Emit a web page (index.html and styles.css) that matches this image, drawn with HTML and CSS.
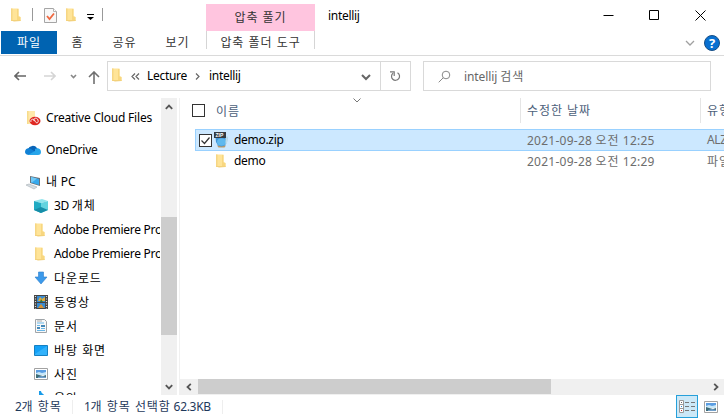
FILE: index.html
```html
<!DOCTYPE html>
<html lang="ko">
<head>
    <meta charset="UTF-8">
    <meta name="viewport" content="width=device-width, initial-scale=1.0">
    <title>intellij</title>
    <link rel="stylesheet" href="styles.css">
</head>
<body>
    <svg class="sprites">
        <symbol id="folder" viewBox="0 0 12 14">
            <path d="M1 .5h7.500V8l2 1v4H1z" fill="#ffe498"/>
            <path d="M1 .5h1.500v12.500H1z" fill="#f6d684"/>
            <path d="M7 1h1.500v7.500l2 .5v4H7z" fill="#f8d780"/>
            <path d="M1 12.500l3 1 6.500-.5v-1H1z" fill="#f3d17b"/>
        </symbol>
        <symbol id="picture" viewBox="0 0 14 12">
            <path d="M.5.5h13v11H.5z" fill="#fff" stroke="#a2a2a2"/>
            <path d="M2 2h10v4H2z" fill="#5a9de2"/>
            <path d="M2 5l3-1 3 1 4-1v3H2z" fill="#c8e7f8"/>
            <path d="M2 6l3 1 4 1 3-1v3H2z" fill="#3c6c78"/>
            <path d="M4 9l4-1 4 1v1H4z" fill="#719fca"/>
        </symbol>
    </svg>
    <div class="explorer">
        <header class="titlebar">
            <div class="quick">
                <svg class="folder" width="12" height="14"><use href="#folder"/></svg>
                <span class="sep"></span>
                <svg class="props" width="13" height="15" viewBox="0 0 13 15">
                    <path d="M.5.5h9l3 3v11H.5z" fill="#f8f8f8" stroke="#a5a5a5"/>
                    <path d="M9.500.5v3h3" fill="#fff" stroke="#b5b5b5"/>
                    <path d="M3 8l2.500 3L10 5.500" fill="none" stroke="#ef6840" stroke-width="1.800"/>
                </svg>
                <svg class="folder" width="12" height="14"><use href="#folder"/></svg>
                <svg class="more" width="7" height="6" viewBox="0 0 7 6"><path d="M0 0h7v1H0zM0 3h7L3.500 6z"/></svg>
                <span class="sep"></span>
            </div>
            <div class="context ko">압축 풀기</div>
            <div class="title">intellij</div>
            <div class="controls">
                <svg width="11" height="11" viewBox="0 0 11 11"><path d="M.5 5.500h10"/></svg>
                <svg width="11" height="11" viewBox="0 0 11 11"><path d="M.5.5h9v9h-9z"/></svg>
                <svg width="11" height="11" viewBox="0 0 11 11"><path d="M.5.5l10 10M10.500.5l-10 10"/></svg>
            </div>
        </header>

        <nav class="ribbon ko">
            <div class="tab file">파일</div>
            <div class="tab home">홈</div>
            <div class="tab share">공유</div>
            <div class="tab view">보기</div>
            <div class="tab tools">압축 폴더 도구</div>
            <svg class="collapse" width="10" height="6" viewBox="0 0 10 6"><path d="M1 1l4 4 4-4" fill="none" stroke="#a0a0a0" stroke-width="1.300"/></svg>
            <div class="help">?</div>
        </nav>

        <div class="navbar">
            <div class="arrows">
                <svg width="12" height="10" viewBox="0 0 12 10"><path d="M12 5H1M5 1L1 5l4 4" stroke="#666"/></svg>
                <svg width="12" height="10" viewBox="0 0 12 10"><path d="M0 5h11M7 1l4 4-4 4" stroke="#d5d5d5"/></svg>
                <svg width="7" height="5" viewBox="0 0 7 5"><path d="M1 1l2.500 2.500L6 1" stroke="#888"/></svg>
                <svg class="up" width="12" height="13" viewBox="0 0 12 13"><path d="M6 13V1M1 6l5-5 5 5" stroke="#707070"/></svg>
            </div>
            <div class="address">
                <svg class="folder" width="12" height="14"><use href="#folder"/></svg>
                <svg class="double" width="9" height="7" viewBox="0 0 9 7"><path d="M4 .5l-3 3 3 3M8 .5l-3 3 3 3"/></svg>
                <span class="crumb">Lecture</span>
                <svg class="chevron" width="5" height="7" viewBox="0 0 5 7"><path d="M1 .5l3 3-3 3"/></svg>
                <span class="crumb last">intellij</span>
                <svg class="drop" width="10" height="7" viewBox="0 0 10 7"><path d="M1 1l4 4 4-4"/></svg>
                <div class="refresh">
                    <svg width="11" height="12" viewBox="0 0 11 12"><path d="M7.500 2.800A4 4 0 1 1 3 3.200M0 1.800h4.200V6" fill="none" stroke="#777" stroke-width="1.600"/></svg>
                </div>
            </div>
            <div class="search">
                <svg width="13" height="13" viewBox="0 0 13 13"><circle cx="8" cy="5" r="3.800"/><path d="M5.200 7.800L.7 12.300"/></svg>
                <span>intellij <span class="ko">검색</span></span>
            </div>
        </div>

        <main class="content">
            <aside class="tree">
                <div class="item root">
                    <svg width="16" height="16" viewBox="0 0 16 16">
                        <path d="M2 1h8v13H2z" fill="#f7dc8c"/><path d="M3.500 1H10v13H3.500z" fill="#ffe9ab"/>
                        <ellipse cx="10" cy="11" rx="5.500" ry="4.200" fill="#df2823"/>
                        <path d="M6 12c-1-3 3-4 4-1s4 2 3-1-5-2-4 1" fill="none" stroke="#fff" stroke-width=".9"/>
                    </svg>
                    <span class="files">Creative Cloud Files</span>
                </div>
                <div class="item root">
                    <svg width="16" height="16" viewBox="0 0 16 16">
                        <path d="M3 7a5 4.500 0 0 1 9-1l2 4-9 1z" fill="#0864b8"/>
                        <path d="M0 10c0-3 3-5 6-3l6 4-8 2C2 13 0 12 0 10z" fill="#1181d5"/>
                        <path d="M10 7c3-2 6 0 6 3 0 2-1 3-3 3H3l7-4z" fill="#27a5ea"/>
                    </svg>
                    <span>OneDrive</span>
                </div>
                <div class="item root">
                    <svg width="16" height="16" viewBox="0 0 16 16">
                        <path d="M5 2l10 2v8L5 9z" fill="#68737b"/><path d="M6 3l8 2v6L6 8.500z" fill="#36a9ed"/>
                        <path d="M6 3l6 1.500-5 4-1-.3z" fill="#71c9f6"/>
                        <path d="M1 11l3-1 8 3-3 2z" fill="#d6dde2" stroke="#a7b0b6" stroke-width=".6"/>
                    </svg>
                    <span><span class="ko">내</span> PC</span>
                </div>
                <div class="item">
                    <svg width="16" height="16" viewBox="0 0 16 16">
                        <path d="M1 3l8-2 6 2-7 2z" fill="#92e5ed"/><path d="M1 3l7 2v10l-7-3z" fill="#20abc3"/>
                        <path d="M8 5l7-2v9l-7 3z" fill="#63d3df"/><path d="M1 12l7-3 7 3-7 3z" fill="#168da8"/>
                    </svg>
                    <span>3D <span class="ko">개체</span></span>
                </div>
                <div class="item">
                    <svg class="folder" width="12" height="14"><use href="#folder"/></svg>
                    <span class="adobe">Adobe Premiere Pro</span>
                </div>
                <div class="item">
                    <svg class="folder" width="12" height="14"><use href="#folder"/></svg>
                    <span class="adobe">Adobe Premiere Pro</span>
                </div>
                <div class="item">
                    <svg width="16" height="16" viewBox="0 0 16 16"><path d="M5.500 2h5v5H14l-6 7-6-7h3.500z" fill="#3c9aeb" stroke="#2e7dcb" stroke-width=".6"/></svg>
                    <span class="ko">다운로드</span>
                </div>
                <div class="item">
                    <svg width="16" height="16" viewBox="0 0 16 16">
                        <path d="M1 1h14v14H1z" fill="#444"/><path d="M4 2h8v6H4z" fill="#398bd2"/><path d="M4 9h8v5H4z" fill="#398bd2"/>
                        <path d="M5 7l2-4 2 2 3-2v4z" fill="#e2ae3a"/><path d="M8 5l2 3H7z" fill="#35743c"/><path d="M5 14l3-4 3 4z" fill="#d89132"/>
                        <path d="M2.500 2v13M13.500 2v13" stroke="#ddd" stroke-width="1.200" stroke-dasharray="1 1.500"/>
                    </svg>
                    <span class="ko">동영상</span>
                </div>
                <div class="item">
                    <svg width="16" height="16" viewBox="0 0 16 16">
                        <path d="M2.500 1.500h9l2 2v11h-11z" fill="#f8f8f8" stroke="#a0a5a9"/>
                        <path d="M4 5h7M4 7.500h3M8 10.500h4M4 12.500h8" stroke="#69b7e8"/>
                        <path d="M8 7h4v2H8zM4 9h3v2H4z" fill="#4487b7"/><path d="M4 3h5" stroke="#aaa"/>
                    </svg>
                    <span class="ko">문서</span>
                </div>
                <div class="item">
                    <svg width="16" height="16" viewBox="0 0 16 16"><path d="M1.500 3.500h13v10h-13z" fill="#13a1f7" stroke="#1580c2"/><path d="M2 12L14 4v9H2z" fill="#32b2fb"/></svg>
                    <span class="ko">바탕 화면</span>
                </div>
                <div class="item">
                    <svg width="16" height="16" viewBox="0 0 16 16"><use href="#picture" x="1" y="2" width="14" height="12"/></svg>
                    <span class="ko">사진</span>
                </div>
                <div class="item">
                    <svg width="16" height="16" viewBox="0 0 16 16"><path d="M8 1c0 3 5 3 4 8-1-2-2-3-4-3v6a3 3 0 1 1-2-3V1z" fill="#189be8"/></svg>
                    <span class="ko">음악</span>
                </div>
            </aside>
            <div class="vscroll">
                <svg width="8" height="6" viewBox="0 0 8 6"><path d="M.8 4.800L4 1.500l3.200 3.300"/></svg>
                <div class="thumb"></div>
                <svg width="8" height="6" viewBox="0 0 8 6"><path d="M.8 1.200L4 4.500l3.200-3.300"/></svg>
            </div>
            <section class="list">
                <div class="columns">
                    <div class="name">
                        <span class="check"></span>
                        <span class="ko">이름</span>
                        <svg class="sort" width="8" height="5" viewBox="0 0 8 5"><path d="M.5.5L4 4 7.500.5" fill="none" stroke="#777"/></svg>
                    </div>
                    <div class="date ko">수정한 날짜</div>
                    <div class="type ko">유형</div>
                </div>
                <div class="row selected">
                    <div class="name">
                        <span class="check"><svg width="11" height="11" viewBox="0 0 11 11"><path d="M1.500 5.500l3 3 5-6" fill="none" stroke="#333" stroke-width="1.200"/></svg></span>
                        <svg class="zip" width="15" height="16" viewBox="0 0 15 16">
                            <path d="M3 13.500h9l-1.500 2h-6z" fill="#b99a6b"/>
                            <path d="M1.500 5h12l-.5 5-2 3.500-3.500 1-3.500-1-2-3.500z" fill="#3d94d8"/>
                            <ellipse cx="7.500" cy="10" rx="4.500" ry="3.800" fill="#5fb9ee"/>
                            <path d="M11.500 4.500h2.500L13 11l-1.500 2z" fill="#bcdcea"/>
                            <path d="M0 0h12v6H0z" fill="#333b42"/>
                            <text x="1.500" y="5" font-size="5" fill="#fff" font-weight="bold">ZIP</text>
                        </svg>
                        <span>demo.zip</span>
                    </div>
                    <div class="date">2021-09-28 <span class="ko">오전</span> 12:25</div>
                    <div class="type">ALZip</div>
                </div>
                <div class="row">
                    <div class="name">
                        <svg class="folder" width="12" height="14"><use href="#folder"/></svg>
                        <span>demo</span>
                    </div>
                    <div class="date">2021-09-28 <span class="ko">오전</span> 12:29</div>
                    <div class="type ko">파일</div>
                </div>
                <div class="hscroll">
                    <svg width="6" height="8" viewBox="0 0 6 8"><path d="M4.800.8L1.500 4l3.300 3.200"/></svg>
                    <div class="thumb"></div>
                    <svg width="6" height="8" viewBox="0 0 6 8"><path d="M1.200.8L4.500 4 1.200 7.200"/></svg>
                </div>
            </section>
        </main>

        <footer class="status">
            <div class="count">2<span class="ko">개 항목</span></div>
            <div class="picked">1<span class="ko">개 항목 선택함</span> 62.3KB</div>
            <div class="modes">
                <div class="mode active">
                    <svg width="16" height="13" viewBox="0 0 16 13">
                        <path d="M.5.5h4v12h-4zM.5 4.500h4M.5 8.500h4" fill="#fff" stroke="#999"/>
                        <path d="M2 2h1v1H2z" fill="#666"/><path d="M2 6h1v1H2z" fill="#2589d8"/><path d="M2 10h1v1H2z" fill="#c22"/>
                        <path d="M6 2.500h4m2 0h4M6 6.500h4m2 0h4M6 10.500h4m2 0h4" stroke="#777"/>
                    </svg>
                </div>
                <div class="mode"><svg width="14" height="12"><use href="#picture"/></svg></div>
            </div>
        </footer>
    </div>
</body>
</html>
```
FILE: styles.css
```css
* {
    box-sizing: border-box;
}

body {
    margin: 0;
    overflow: hidden;
    background: #fff;
    color: #000;
    font-family: "Noto Sans", "Noto Sans CJK KR", sans-serif;
    font-size: 12px;
    line-height: 16px;
    letter-spacing: -0.3px;
    white-space: nowrap;
}

svg {
    display: block;
    flex: none;
}

.sprites {
    position: absolute;
    width: 0;
    height: 0;
}

.ko {
    font-family: "Noto Sans CJK KR", sans-serif;
    letter-spacing: 0.9px;
}

.explorer {
    display: flex;
    flex-direction: column;
    width: 724px;
    height: 419px;
}

/* title bar */
.titlebar {
    display: flex;
    height: 31px;
}

.quick {
    display: flex;
    align-items: center;
    width: 206px;
    padding-left: 10px;
}

.sep {
    width: 1px;
    height: 13px;
    background: #999;
}

.quick .sep {
    margin: 0 0 2px 10px;
}

.quick .folder {
    margin-bottom: 1px;
}

.props {
    margin: 0 8px 0 11px;
}

.more {
    margin: 3px -2px 0 10px;
}

.context {
    width: 109px;
    height: 27px;
    margin-top: 4px;
    background: #ffc5df;
    color: #333;
    line-height: 26px;
    text-align: center;
}

.title {
    margin-left: 13px;
    line-height: 31px;
}

.controls {
    display: flex;
    gap: 35px;
    margin: 10px 18px 0 auto;
}

.controls path {
    fill: none;
    stroke: #000;
}

/* ribbon tabs */
.ribbon {
    display: flex;
    height: 25px;
    padding-left: 1px;
    border-bottom: 1px solid #dadada;
    color: #333;
    line-height: 22px;
}

.tab {
    height: 23px;
    text-align: center;
}

.file {
    width: 56px;
    background: #0063b1;
    color: #fff;
}

.home {
    width: 41px;
}

.share, .view {
    width: 53px;
}

.tools {
    width: 109px;
    height: 18px;
    margin-left: 2px;
    border-left: 1px solid #d5d5d5;
    border-right: 1px solid #d5d5d5;
}

.collapse {
    margin: 9px 9px 0 auto;
}

.help {
    width: 16px;
    height: 16px;
    margin: 4px 4px 0 0;
    border: 1px solid #174f86;
    border-radius: 50%;
    background: #0870d1;
    color: #fff;
    font: bold 13px/14px "Open Sans", sans-serif;
    letter-spacing: 0;
    text-align: center;
}

/* address and search */
.navbar {
    display: flex;
    height: 42px;
    padding: 5px 13px 7px 14px;
}

.arrows {
    display: flex;
    align-items: center;
    width: 93px;
}

.arrows svg:nth-child(2) {
    margin: 0 14px 0 18px;
}

.arrows .up {
    margin: 2px 0 0 11px;
}

.arrows path {
    fill: none;
    stroke-width: 1.6;
}

.address {
    display: flex;
    align-items: center;
    width: 304px;
    height: 30px;
    border: 1px solid #d9d9d9;
    padding-left: 3px;
}

.address .folder {
    margin: 0 1px 2px 0;
}

.address path {
    stroke-width: 1.2;
}

.double, .chevron, .drop {
    fill: none;
    stroke: #666;
}

.double {
    margin: 0 7px;
}

.crumb {
    width: 40px;
}

.chevron {
    margin: 0 9px 0 8px;
}

.last {
    width: auto;
}

.drop {
    margin: 2px 9px 0 auto;
}

.address .drop path {
    stroke-width: 2;
}

.refresh {
    display: flex;
    align-items: center;
    justify-content: center;
    width: 30px;
    height: 28px;
    border-left: 1px solid #d9d9d9;
}

.search {
    display: flex;
    align-items: center;
    width: 288px;
    height: 30px;
    margin-left: 12px;
    padding-left: 14px;
    border: 1px solid #d9d9d9;
    color: #666;
    letter-spacing: -0.1px;
}

.search svg {
    margin-right: 13px;
    fill: none;
    stroke: #888;
}

/* folder tree */
.content {
    display: flex;
    height: 297px;
}

.tree {
    width: 161px;
    height: 297px;
    padding: 8px 1px 0 0;
    overflow: hidden;
}

.item {
    display: flex;
    align-items: center;
    height: 24px;
    padding-left: 33px;
    overflow: hidden;
    line-height: 14px;
}

.item.root {
    margin-bottom: 8px;
    padding-left: 25px;
    letter-spacing: -0.2px;
}

.item.root:nth-child(3) {
    margin-bottom: 0;
}

.item svg {
    margin-right: 5px;
}

.item span {
    margin-bottom: 1px;
}

.item .adobe {
    margin-bottom: 0;
}

.item .folder {
    margin: 0 8px 0 1px;
}

.vscroll {
    display: flex;
    flex-direction: column;
    align-items: center;
    justify-content: space-between;
    width: 16px;
    height: 297px;
    padding: 6px 0 5px;
    background: #f0f0f0;
}

.vscroll .thumb {
    width: 16px;
    height: 118px;
    margin: 0 0 -57px;
    background: #cdcdcd;
}

.vscroll path, .hscroll path {
    fill: none;
    stroke: #555;
    stroke-width: 1.8;
}

/* file list */
.list {
    display: flex;
    flex-direction: column;
    width: 545px;
    margin-left: 2px;
    border-left: 1px solid #f0f0f0;
    overflow: hidden;
}

.columns {
    display: flex;
    height: 25px;
    margin-bottom: 6px;
    color: #4c607a;
    line-height: 24px;
}

.name, .date, .type {
    flex: none;
}

.columns .name {
    position: relative;
    display: flex;
    align-items: center;
    width: 340px;
    padding-left: 12px;
}

.columns .check {
    margin-right: 11px;
}

.columns .date, .columns .type {
    border-left: 1px solid #e5e5e5;
    padding-left: 6px;
}

.sort {
    position: absolute;
    left: 173px;
    top: 0;
}

.check {
    display: block;
    width: 13px;
    height: 13px;
    border: 1px solid #333;
    background: #fff;
}

.row {
    display: flex;
    height: 20px;
    margin-left: 15px;
    border-left: 1px solid transparent;
    line-height: 20px;
}

.selected {
    height: 22px;
    border: 1px solid #99d1ff;
    border-right: 0;
    background: #cce8ff;
}

.row .name {
    display: flex;
    align-items: center;
    width: 324px;
    padding-left: 3px;
}

.row .folder {
    margin: 0 7px 1px 16px;
}

.zip {
    margin: 0 5px 0 2px;
    font-family: "Liberation Sans", sans-serif;
    letter-spacing: 0;
}

.date {
    width: 180px;
}

.row .date, .row .type {
    padding-left: 7px;
    color: #6d6d6d;
    line-height: 19px;
}

.row .date {
    letter-spacing: 0.25px;
}

.row .date .ko {
    letter-spacing: 0.9px;
}

.hscroll {
    display: flex;
    align-items: center;
    height: 16px;
    margin-top: auto;
    padding: 0 5px 0 6px;
    background: #f0f0f0;
}

.hscroll .thumb {
    width: 353px;
    height: 15px;
    margin: 0 auto 1px 6px;
    background: #cdcdcd;
}

/* status bar */
.status {
    display: flex;
    height: 24px;
    padding-left: 15px;
    color: #1e395b;
    line-height: 22px;
}

.count, .picked {
    height: 14px;
    margin-top: 5px;
    border-right: 1px solid #eee;
    line-height: 12px;
}

.count {
    width: 58px;
}

.picked {
    width: 150px;
    padding-left: 11px;
}

.modes {
    display: flex;
    margin-left: auto;
}

.mode {
    display: flex;
    align-items: center;
    justify-content: center;
    width: 22px;
    height: 23px;
    margin-right: 2px;
}

.active {
    border: 1px solid #26a0da;
    background: #cce8f7;
}
```
